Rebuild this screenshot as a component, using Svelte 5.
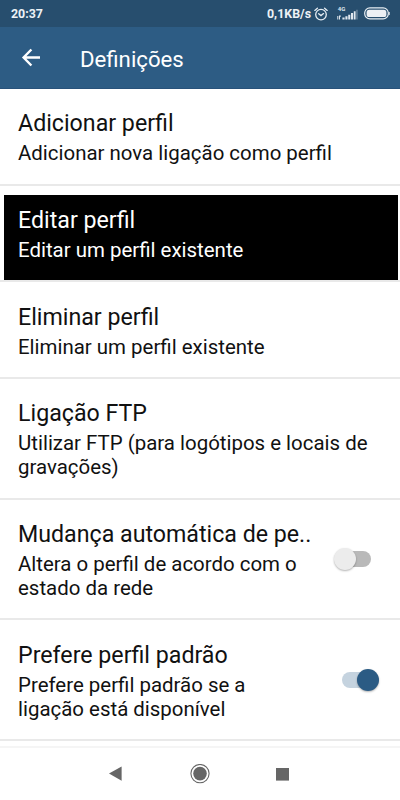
<script lang="ts">
  type Setting = {
    title: string;
    lines: string[];
    selected?: boolean;
    toggle?: boolean;
  };

  let settings: Setting[] = $state([
    { title: 'Adicionar perfil', lines: ['Adicionar nova ligação como perfil'] },
    { title: 'Editar perfil', lines: ['Editar um perfil existente'], selected: true },
    { title: 'Eliminar perfil', lines: ['Eliminar um perfil existente'] },
    { title: 'Ligação FTP', lines: ['Utilizar FTP (para logótipos e locais de', 'gravações)'] },
    {
      title: 'Mudança automática de pe..',
      lines: ['Altera o perfil de acordo com o', 'estado da rede'],
      toggle: false
    },
    {
      title: 'Prefere perfil padrão',
      lines: ['Prefere perfil padrão se a', 'ligação está disponível'],
      toggle: true
    }
  ]);
</script>

<div class="screen">
  <div class="status">
    <span class="time">20:37</span>
    <span class="speed">0,1KB/s</span>
    <svg class="alarm" width="14" height="14" viewBox="0 0 14 14" fill="none" stroke="#e6edf3" stroke-width="1.3">
      <circle cx="7" cy="7.6" r="5.3" />
      <path d="M.8 3.4 3.4 1.2M13.2 3.4 10.6 1.2M4.7 6.7 7 8.6l2.5-2" stroke-linecap="round" />
    </svg>
    <svg class="signal" width="21" height="15" viewBox="0 0 21 15" fill="#dfe7ee">
      <text x=".8" y="5.2" font-size="6" font-weight="700">4G</text>
      <path d="M.3 10h1v3.5h-1zM2 9.5h1.8v1.2H3v2.8H2zM5.4 11.5h2.2v2H5.4zM8.4 10.2h2.1v3.3H8.4zM11.2 8.8h2.1v4.7h-2.1zM14 7h2.1v6.5H14zM16.8 5.2h1.8v8.3h-1.8z" />
      <path d="M19.2 3.7h1.5v9.8h-1.5z" opacity=".35" />
    </svg>
    <svg class="battery" width="26" height="13" viewBox="0 0 26 13">
      <rect x=".7" y=".9" width="23.6" height="11" rx="5.2" fill="none" stroke="#e8eef3" stroke-width="1.2" />
      <rect x="2.6" y="2.8" width="19.8" height="7.2" rx="2.6" fill="#edf0f4" />
      <path d="M25.2 5v3" stroke="#e8eef3" />
    </svg>
  </div>

  <header>
    <button class="back" aria-label="Voltar">
      <svg width="20" height="20" viewBox="0 0 20 20" fill="none" stroke="#fff" stroke-width="2.4">
        <path d="M19 10.5H2.8M10.4 2.5 2.6 10.5l7.8 8" />
      </svg>
    </button>
    <h1>Definições</h1>
  </header>

  <main>
    {#each settings as item}
      <div class="row" class:selected={item.selected}>
        <div class="text">
          <h2>{item.title}</h2>
          {#each item.lines as line}
            <p>{line}</p>
          {/each}
        </div>
        {#if item.toggle !== undefined}
          <button
            class="switch"
            class:on={item.toggle}
            role="switch"
            aria-checked={item.toggle}
            aria-label={item.title}
            onclick={() => (item.toggle = !item.toggle)}
          >
            <span class="track"></span>
            <span class="thumb"></span>
          </button>
        {/if}
      </div>
    {/each}
  </main>

  <nav>
    <svg width="14" height="16" viewBox="0 0 14 16"><path d="M0 7.6 12.6.4v14.4z" fill="#666" /></svg>
    <svg width="20" height="20" viewBox="0 0 20 20">
      <circle cx="10" cy="9.6" r="9.1" fill="none" stroke="#666" stroke-width="1.1" />
      <circle cx="10" cy="9.6" r="6.8" fill="#666" />
    </svg>
    <svg width="13" height="13" viewBox="0 0 13 13"><path d="M0 0h13v12.6H0z" fill="#666" /></svg>
  </nav>
</div>

<style>
  :global(body) {
    margin: 0;
    overflow: hidden;
  }

  .screen {
    width: 400px;
    height: 800px;
    display: flex;
    flex-direction: column;
    overflow: hidden;
    background: #fff;
    font-family: Roboto, sans-serif;
  }

  h1,
  h2,
  p {
    margin: 0;
    font-weight: 400;
    white-space: nowrap;
  }

  button {
    padding: 0;
    border: none;
    background: none;
  }

  svg {
    display: block;
    flex: none;
  }

  .status {
    height: 27px;
    flex: none;
    box-sizing: border-box;
    padding: 0 10px 0 11px;
    display: flex;
    align-items: center;
    background: #274e6e;
    color: #edf2f6;
    font-size: 12.4px;
    font-weight: 700;
  }

  .time {
    margin-right: auto;
  }

  .alarm {
    margin-left: 3px;
  }

  .signal {
    margin-left: 9px;
  }

  .battery {
    margin-left: 6px;
  }

  header {
    height: 62px;
    flex: none;
    box-sizing: border-box;
    display: flex;
    align-items: center;
    padding-left: 21px;
    background: #2d5c84;
    border-bottom: 1px solid #28527a;
    color: #fff;
  }

  .back {
    width: 20px;
    height: 20px;
    margin-bottom: 1px;
  }

  h1 {
    margin-left: 39px;
    font-size: 22.2px;
    line-height: 28px;
    padding-top: 3px;
  }

  main {
    flex: 1;
    min-height: 0;
    overflow: hidden;
  }

  .row {
    display: flex;
    align-items: center;
    justify-content: space-between;
    box-sizing: border-box;
    padding: 21.4px 21px 18px 18px;
    border-bottom: 2px solid #e9e9e9;
    color: #111;
  }

  .row.selected {
    background: linear-gradient(#000, #000) 4px 9px / 394px 85px no-repeat;
    color: #fff;
  }

  h2 {
    font-size: 23.2px;
    line-height: 27px;
    margin-bottom: 4px;
  }

  p {
    font-size: 20.45px;
    line-height: 24.2px;
  }

  .switch {
    width: 37px;
    height: 24px;
    flex: none;
    display: grid;
    align-items: center;
    margin-right: 8.5px;
    margin-bottom: 3px;
  }

  .track,
  .thumb {
    grid-area: 1 / 1;
  }

  .track {
    height: 16px;
    margin-left: 3px;
    border-radius: 8px;
    background: #b9b9b9;
  }

  .thumb {
    width: 22px;
    height: 22px;
    border-radius: 50%;
    background: #ececec;
    box-shadow: 0 1px 2px rgba(0, 0, 0, 0.3);
  }

  .switch.on {
    margin-right: 0;
  }

  .switch.on .track {
    margin: 0 3px 0 0;
    background: #c5d3df;
  }

  .switch.on .thumb {
    justify-self: end;
    background: #2b5b84;
  }

  nav {
    height: 54px;
    flex: none;
    box-sizing: border-box;
    display: flex;
    align-items: center;
    justify-content: space-between;
    padding: 0 111px 0 109px;
    border-top: 2px solid #f5f5f5;
  }
</style>
